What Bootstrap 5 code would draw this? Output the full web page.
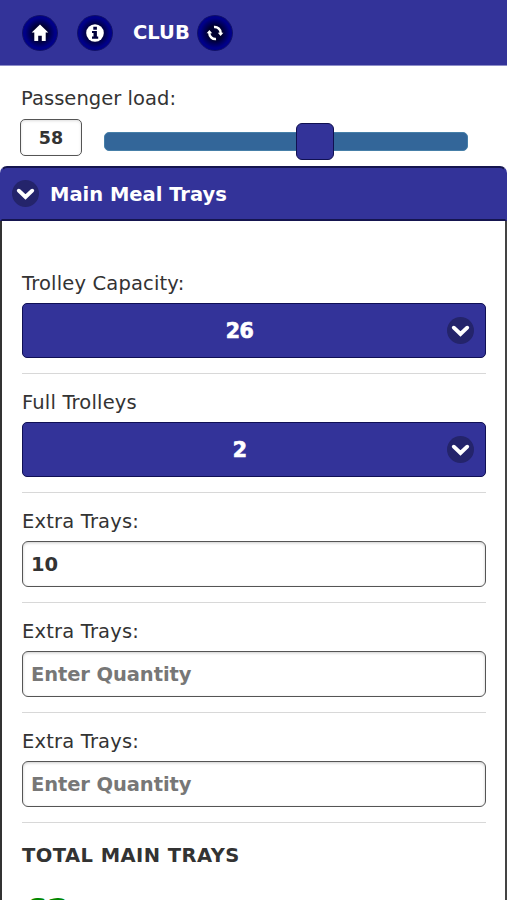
<!DOCTYPE html>
<html lang="en">
<head>
<meta charset="utf-8">
<meta name="viewport" content="width=device-width, initial-scale=1">
<title>Club – Main Meal Trays</title>
<link href="https://cdn.jsdelivr.net/npm/bootstrap@5.3.0/dist/css/bootstrap.min.css" rel="stylesheet">
<style>
body{font-family:Verdana,"DejaVu Sans",sans-serif;font-size:19.5px;line-height:24px;color:#333;background:#fff;height:900px;overflow:hidden}
.topbar{height:66px;background:#339;border-bottom:1px solid #8d8dc8;padding:0 0 0 22px}
.round-btn{width:36px;height:36px;border-radius:50%;border:1px solid #10106a;background:radial-gradient(circle,#000030 0 30%,#000088 62%,#00008c 100%);padding:0}
.round-btn svg{display:block;margin:auto}
.chev svg{display:block}
.info-btn{margin-left:19px}
.club-title{font-size:19.5px;font-weight:700;color:#fff;margin:0 7px 0 20px}
.load-area{height:100px;padding:21px 39px 0 20px}
.load-row{margin-top:8px}
.load-box{width:62px;height:37px;border:1.5px solid #555;border-radius:5px;font-size:17.5px;font-weight:700;text-align:center;padding:0;color:#333;box-shadow:inset 0 1px 3px #0002}
.track{height:19px;background:#369;border-radius:5px;border:1px solid #467fa8;margin:13px 0 0 22px}
.thumb{left:191px;top:-10px;width:38px;height:37px;background:#339;border:1.5px solid #101050;border-radius:6px}
.fold-head{height:55px;background:#339;border:2px solid #15154f;border-left-color:#339;border-right-color:#339;border-bottom-width:2px;border-radius:7px 7px 0 0;color:#fff;font-weight:700;padding:0 10px}
.fold-title{padding:2px 0 0 3px}
.chev{width:27px;height:27px;border-radius:50%;background:#24246b}
.fold-body{border-left:2px solid #333;border-right:2px solid #444;height:679px;padding:51px 19px 0 20px;overflow:hidden}
.field-block{border-bottom:1px solid #d8d8d8;margin-bottom:17px;padding-bottom:15px}
.field-label{display:block;height:24px;margin-bottom:7px;white-space:nowrap;letter-spacing:.17px}
.load-area .field-label{letter-spacing:.05px;padding-left:1px}
.pick{height:55px;background:#339;border:1.5px solid #101055;border-radius:5px;color:#fff;font-weight:700;font-size:20.5px;padding:0 11px 0 33px;-webkit-text-stroke:.7px #fff}
.pick-value{letter-spacing:-.6px;padding-top:1px}
.qty{height:46px;border:1.5px solid #555;border-radius:6px;font-weight:700;font-size:19.5px;color:#333;padding:0 8px;letter-spacing:-.1px;box-shadow:inset 0 1px 3px #0003}
.qty::placeholder{color:#777;opacity:1}
.sum-label{letter-spacing:.45px;padding-top:4px}
.sum-value{font-size:34px;font-weight:700;line-height:40px;color:#080;letter-spacing:-1px;margin:23px 0 0 2px}
</style>
<script src="https://cdn.jsdelivr.net/npm/bootstrap@5.3.0/dist/js/bootstrap.bundle.min.js" defer></script>
</head>
<body>
<svg class="d-none"><symbol id="chevron" viewBox="0 0 27 27"><path d="M6.800 10.700l6.700 6.300 6.700-6.300" fill="none" stroke="#fff" stroke-width="3.900" stroke-linecap="round"/></symbol></svg>
<header class="topbar d-flex align-items-center">
  <button class="round-btn" aria-label="Home"><svg width="34" height="34" viewBox="0 0 34 34"><path fill="#fff" d="M17 8.500l8.300 8h-2.600V25h-3.900v-5.300h-3.600V25h-3.900v-8.500H8.700z"/></svg></button>
  <button class="round-btn info-btn" aria-label="Info"><svg width="34" height="34" viewBox="0 0 34 34"><circle cx="17" cy="17" r="8.800" fill="#fff"/><path fill="#00003c" d="M15.300 10.700h3.600v3h-3.600zM14 15h4.900v5.500h1.300v2.200H14v-2.200h1.500V17H14z"/></svg></button>
  <h1 class="club-title">CLUB</h1>
  <button class="round-btn" aria-label="Refresh"><svg width="34" height="34" viewBox="0 0 34 34"><g fill="none" stroke="#fff" stroke-width="2.400"><path d="M16 11a6 6 0 0 1 6.700 6"/><path d="M18 23a6 6 0 0 1-6.700-6"/></g><path fill="#fff" d="M19.800 16.700h5.600L22.600 20zM8.600 17.300h5.600L11.400 14z"/></svg></button>
</header>
<section class="load-area">
  <label class="field-label mb-0" for="load">Passenger load:</label>
  <div class="load-row d-flex">
    <input id="load" class="load-box" value="58">
    <div class="track position-relative flex-grow-1"><div class="thumb position-absolute"></div></div>
  </div>
</section>
<main>
  <div class="fold-head d-flex align-items-center"><span class="chev me-2"><svg width="27" height="27"><use href="#chevron"/></svg></span><span class="fold-title">Main Meal Trays</span></div>
  <div class="fold-body">
    <div class="field-block"><span class="field-label">Trolley Capacity:</span>
      <div class="pick d-flex align-items-center"><span class="pick-value flex-grow-1 text-center pe-4">26</span><span class="chev"><svg width="27" height="27"><use href="#chevron"/></svg></span></div></div>
    <div class="field-block"><span class="field-label">Full Trolleys</span>
      <div class="pick d-flex align-items-center"><span class="pick-value flex-grow-1 text-center pe-4">2</span><span class="chev"><svg width="27" height="27"><use href="#chevron"/></svg></span></div></div>
    <div class="field-block"><label class="field-label" for="q1">Extra Trays:</label><input id="q1" class="qty w-100 d-block" value="10"></div>
    <div class="field-block"><label class="field-label" for="q2">Extra Trays:</label><input id="q2" class="qty w-100 d-block" placeholder="Enter Quantity"></div>
    <div class="field-block"><label class="field-label" for="q3">Extra Trays:</label><input id="q3" class="qty w-100 d-block" placeholder="Enter Quantity"></div>
    <div class="fw-bold sum-label">TOTAL MAIN TRAYS</div>
    <div class="sum-value">62</div>
  </div>
</main>
</body>
</html>
